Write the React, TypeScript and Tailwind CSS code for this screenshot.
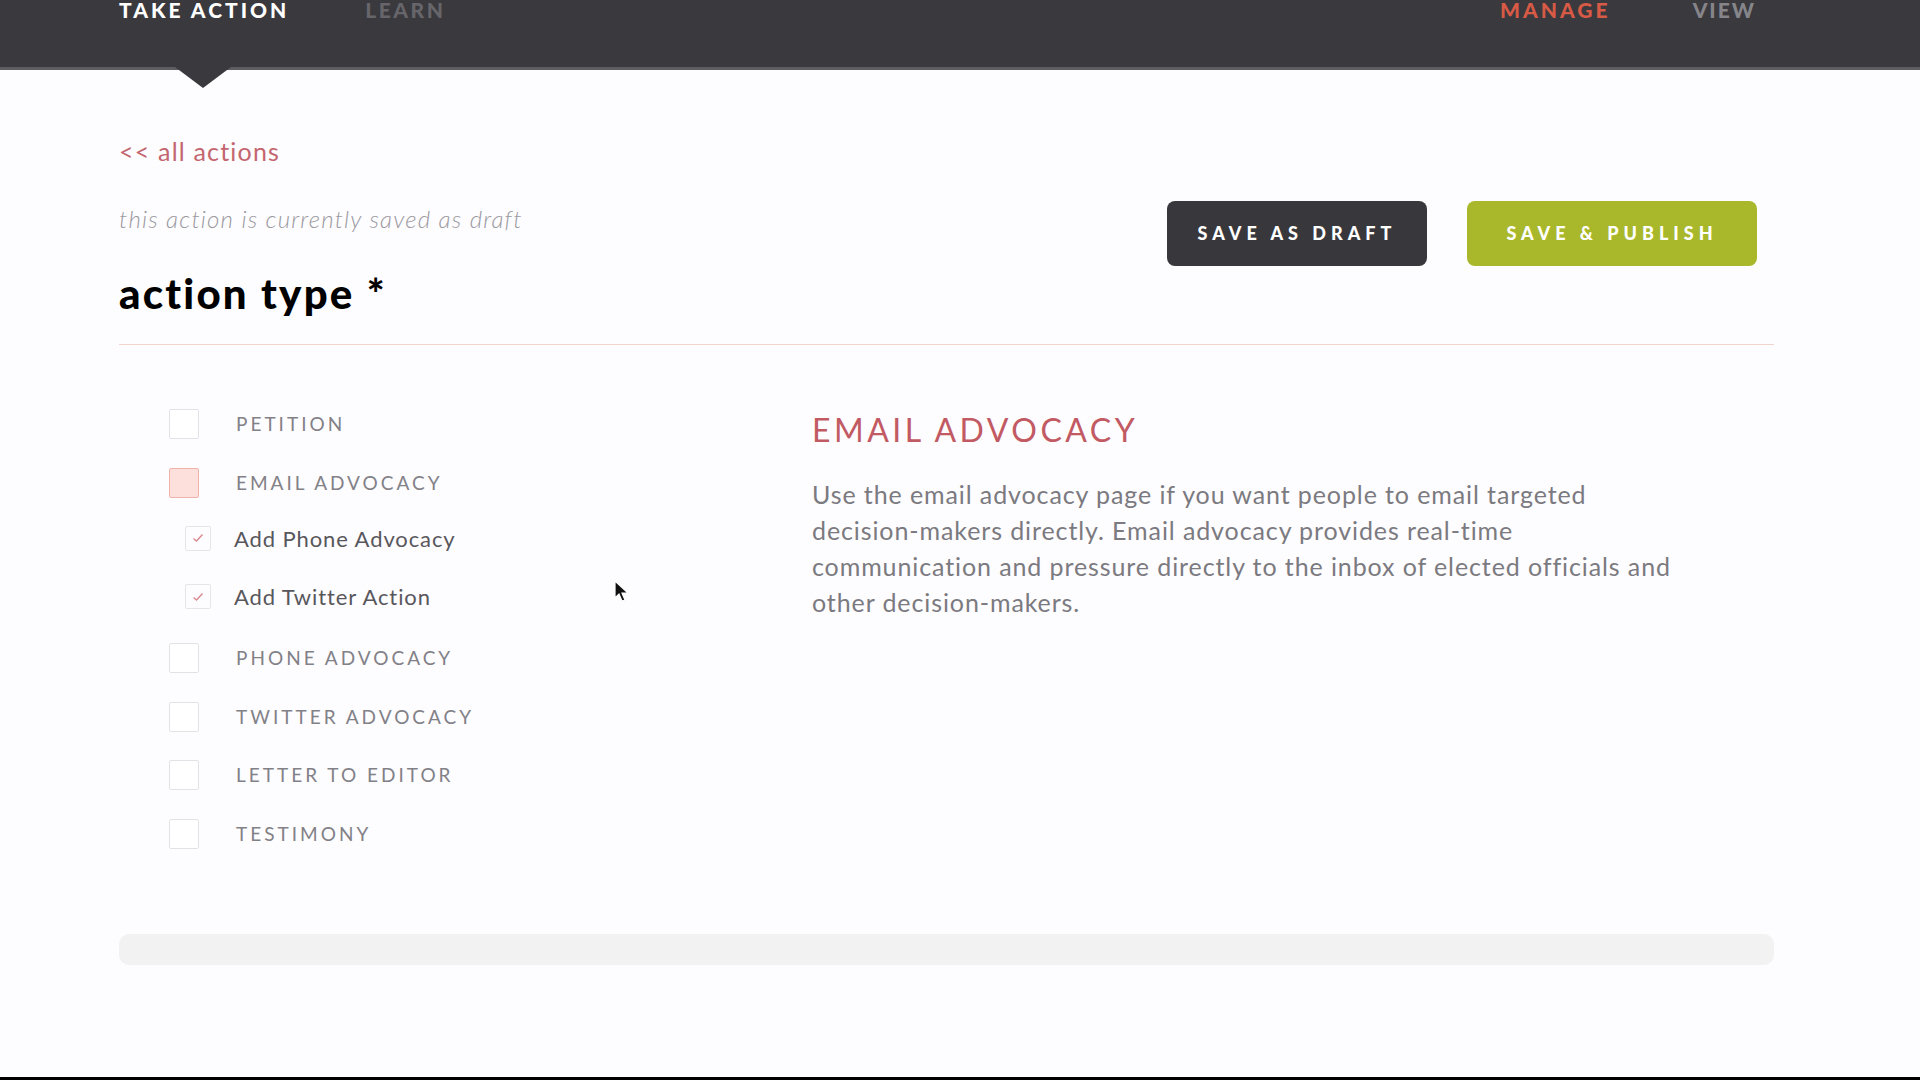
import React from "react";

// ==========================================
// ACTION EDITOR
// Pick an action type for a draft action
// ==========================================

type ActionRow = {
  label: string;
  checked?: boolean;
  sub?: boolean;
};

const ACTION_ROWS: ActionRow[] = [
  { label: "PETITION" },
  { label: "EMAIL ADVOCACY", checked: true },
  { label: "Add Phone Advocacy", sub: true, checked: true },
  { label: "Add Twitter Action", sub: true, checked: true },
  { label: "PHONE ADVOCACY" },
  { label: "TWITTER ADVOCACY" },
  { label: "LETTER TO EDITOR" },
  { label: "TESTIMONY" },
];

export default function App() {
  return (
    <div className="relative h-[1080px] overflow-hidden bg-[#fdfcfe] font-[Lato,'Liberation_Sans',sans-serif]">
      {/* Top nav */}
      <div className="flex h-[70px] bg-[#3a393e] border-b-[3px] border-[#5e5d62]">
        <div className="ml-[119px] w-[1655px] pr-[18px] flex justify-between items-start -mt-[2px]">
          <div className="flex gap-[76px]">
            <div className="relative">
              <span className="text-[21px] leading-[24px] font-black tracking-[3px] text-white">TAKE ACTION</span>
              {/* active tab pointer */}
              <div className="absolute left-[56px] top-[69px] w-0 h-0 border-l-[28px] border-r-[28px] border-t-[21px] border-l-transparent border-r-transparent border-t-[#3a393e]" />
            </div>
            <span className="text-[21px] leading-[24px] font-black tracking-[2.5px] text-[#66656a]">LEARN</span>
          </div>
          <div className="flex gap-[82px]">
            <span className="text-[21px] leading-[24px] font-black tracking-[3px] text-[#d65a45]">MANAGE</span>
            <span className="text-[21px] leading-[24px] font-black tracking-[2px] text-[#86858a]">VIEW</span>
          </div>
        </div>
      </div>

      <div className="ml-[119px] w-[1655px]">
        {/* Header row */}
        <div className="flex justify-between items-start pt-[67px]">
          <div className="flex flex-col">
            <a className="text-[25px] leading-[28px] tracking-[1.2px] text-[#c4666f]">&lt;&lt; all actions</a>
            <p className="mt-[40px] text-[24px] leading-[28px] tracking-[1.2px] italic font-light text-[#9a999e]">
              this action is currently saved as draft
            </p>
            <h1 className="mt-[37px] text-[42px] leading-[46px] tracking-[2.2px] font-black text-black">action type *</h1>
          </div>
          <div className="flex gap-[40px] mt-[64px] mr-[17px]">
            <button className="w-[260px] h-[65px] rounded-[8px] bg-[#38373c] text-white text-[18px] font-black tracking-[5px]">
              SAVE AS DRAFT
            </button>
            <button className="w-[290px] h-[65px] rounded-[8px] bg-[#a9b82b] text-white text-[18px] font-black tracking-[5px]">
              SAVE &amp; PUBLISH
            </button>
          </div>
        </div>

        <div className="mt-[28px] h-px bg-[#f2d4cc]" />

        {/* Action type picker */}
        <div className="flex">
          <div className="w-[693px] pl-[50px] pt-[50px] flex flex-col">
            {ACTION_ROWS.map((row) => (
              <Row key={row.label} {...row} />
            ))}
          </div>
          <div className="flex-1 pt-[66px]">
            <h2 className="text-[32px] leading-[38px] tracking-[3.5px] text-[#c25a63]">EMAIL ADVOCACY</h2>
            <p className="mt-[27px] w-[872px] text-[25px] leading-[36px] tracking-[0.9px] text-[#7b7a80]">
              Use the email advocacy page if you want people to email targeted decision-makers directly. Email
              advocacy provides real-time communication and pressure directly to the inbox of elected officials and
              other decision-makers.
            </p>
          </div>
        </div>

        {/* Footer strip */}
        <div className="mt-[71px] h-[31px] rounded-[10px] bg-[#f2f2f3]" />
      </div>

      <div className="absolute bottom-0 left-0 right-0 h-[3px] bg-black" />

      {/* Mouse pointer */}
      <svg className="absolute left-[614px] top-[580px]" width="16" height="24" viewBox="0 0 16 24">
        <path d="M1 1 L1 18 L5 14 L8 21 L11 20 L8 13 L14 13 Z" fill="#111" stroke="#fff" strokeWidth="1.2" />
      </svg>
    </div>
  );
}

// One checkbox row of the picker
function Row({ label, checked, sub }: ActionRow) {
  if (sub) {
    return (
      <div className="h-[58.5px] pb-[6px] flex items-center">
        <div className="ml-[16px] w-[26px] h-[25px] border border-[#e6e5ea] rounded-[2px] flex items-center justify-center">
          {checked && (
            <svg width="12" height="10" viewBox="0 0 12 10">
              <path d="M1.5 5.5 L4.5 8 L10.5 1.5" fill="none" stroke="#d98a90" strokeWidth="1.4" />
            </svg>
          )}
        </div>
        <span className="ml-[23px] text-[22px] tracking-[0.9px] text-[#58575c]">{label}</span>
      </div>
    );
  }
  return (
    <div className="h-[58.5px] flex items-center">
      <div
        className={`w-[30px] h-[30px] border rounded-[2px] ${
          checked ? "bg-[#fde0dc] border-[#f0b3ac]" : "border-[#e3e2e7] bg-white"
        }`}
      />
      <span className="ml-[37px] text-[19px] tracking-[3px] text-[#828187]">{label}</span>
    </div>
  );
}
